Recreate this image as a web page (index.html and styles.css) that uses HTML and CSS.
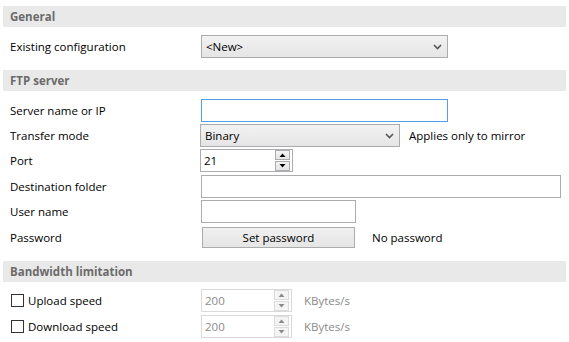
FILE: index.html
```html
<!DOCTYPE html>
<html>
<head>
<meta charset="utf-8">
<link rel="stylesheet" href="styles.css">
</head>
<body>
<div class="page">
  <div class="band band-first">General</div>
  <div class="row row-config">
    <div class="label">Existing configuration</div>
    <div class="combo combo-config"><span>&lt;New&gt;</span>
      <svg class="chev" width="9" height="6" viewBox="0 0 9 6"><path d="M1 1 L4.5 4.5 L8 1" fill="none" stroke="#555" stroke-width="1.6"/></svg>
    </div>
  </div>

  <div class="band">FTP server</div>
  <div class="group">
    <div class="row">
      <div class="label">Server name or IP</div>
      <div class="field field-focus w-server"></div>
    </div>
    <div class="row">
      <div class="label">Transfer mode</div>
      <div class="combo combo-mode"><span>Binary</span>
        <svg class="chev" width="9" height="6" viewBox="0 0 9 6"><path d="M1 1 L4.5 4.5 L8 1" fill="none" stroke="#555" stroke-width="1.6"/></svg>
      </div>
      <div class="note">Applies only to mirror</div>
    </div>
    <div class="row">
      <div class="label">Port</div>
      <div class="spin spin-port">
        <span class="spin-val">21</span>
        <div class="spin-btns">
          <div class="sbtn"><svg width="7" height="4" viewBox="0 0 7 4"><path d="M0.5 4 L3.5 0.5 L6.5 4 Z" fill="#000"/></svg></div>
          <div class="sbtn"><svg width="7" height="4" viewBox="0 0 7 4"><path d="M0.5 0 L3.5 3.5 L6.5 0 Z" fill="#000"/></svg></div>
        </div>
      </div>
    </div>
    <div class="row">
      <div class="label">Destination folder</div>
      <div class="field w-dest"></div>
    </div>
    <div class="row">
      <div class="label">User name</div>
      <div class="field w-user"></div>
    </div>
    <div class="row">
      <div class="label">Password</div>
      <div class="button">Set password</div>
      <div class="note note-pw">No password</div>
    </div>
  </div>

  <div class="band band-bw">Bandwidth limitation</div>
  <div class="group-bw">
    <div class="row row-bw">
      <div class="label label-check"><span class="check"></span>Upload speed</div>
      <div class="spin spin-dis">
        <span class="spin-val">200</span>
        <div class="spin-btns">
          <div class="sbtn"><svg width="7" height="4" viewBox="0 0 7 4"><path d="M0.5 4 L3.5 0.5 L6.5 4 Z" fill="#8a8a8a"/></svg></div>
          <div class="sbtn"><svg width="7" height="4" viewBox="0 0 7 4"><path d="M0.5 0 L3.5 3.5 L6.5 0 Z" fill="#8a8a8a"/></svg></div>
        </div>
      </div>
      <div class="unit">KBytes/s</div>
    </div>
    <div class="row row-bw">
      <div class="label label-check"><span class="check"></span>Download speed</div>
      <div class="spin spin-dis">
        <span class="spin-val">200</span>
        <div class="spin-btns">
          <div class="sbtn"><svg width="7" height="4" viewBox="0 0 7 4"><path d="M0.5 4 L3.5 0.5 L6.5 4 Z" fill="#8a8a8a"/></svg></div>
          <div class="sbtn"><svg width="7" height="4" viewBox="0 0 7 4"><path d="M0.5 0 L3.5 3.5 L6.5 0 Z" fill="#8a8a8a"/></svg></div>
        </div>
      </div>
      <div class="unit">KBytes/s</div>
    </div>
  </div>
</div>
</body>
</html>
```

FILE: styles.css
```css
* { box-sizing: border-box; }
html, body { margin: 0; padding: 0; background: #fff; }
body {
  font-family: "Open Sans", "Noto Sans", "DejaVu Sans", sans-serif;
  font-size: 11.5px;
  color: #000;
  width: 569px;
  height: 342px;
  overflow: hidden;
}
.page {
  padding: 6px 3px 0 3px;
  display: flex;
  flex-direction: column;
}
.band {
  height: 21px;
  background: #e9e9e9;
  color: #6b6b6b;
  font-weight: bold;
  padding-left: 7px;
  display: flex;
  align-items: center;
  margin-top: 11px;
}
.band-first { margin-top: 0; }
.band-bw { margin-top: 11px; }
.row {
  display: flex;
  align-items: center;
  height: 25px;
  padding-left: 7px;
}
.row-config { margin-top: 7px; height: 25px; }
.group { margin-top: 7px; display: flex; flex-direction: column; }
.group .row:nth-child(4), .group .row:nth-child(6) { height: 26px; }
.label { width: 191px; flex: none; }
.combo {
  height: 23px;
  border: 1px solid #acacac;
  background: linear-gradient(#f2f2f2, #e5e5e5);
  display: flex;
  align-items: center;
  justify-content: space-between;
  padding: 0 5px 0 4px;
  flex: none;
}
.combo-config { width: 247px; }
.combo-mode { width: 200px; margin-left: -1px; }
.chev { display: block; }
.note { margin-left: 9px; }
.note-pw { margin-left: 17px; }
.field {
  height: 23px;
  border: 1px solid #acacac;
  background: #fff;
  flex: none;
}
.field-focus { border-color: #569de5; }
.w-server { width: 247px; }
.w-dest { width: 360px; height: 23px; }
.w-user { width: 155px; height: 23px; }
.button {
  width: 153px;
  height: 21px;
  margin-left: 1px;
  border: 1px solid #acacac;
  background: linear-gradient(#f0f0f0, #e5e5e5);
  display: flex;
  align-items: center;
  justify-content: center;
  flex: none;
}
.spin {
  height: 23px;
  border: 1px solid #abadb3;
  background: #fff;
  display: flex;
  align-items: center;
  justify-content: space-between;
  padding: 0 2px 0 3px;
  flex: none;
}
.spin-port { width: 93px; margin-left: -1px; }
.spin-btns {
  display: flex;
  flex-direction: column;
  gap: 1px;
  width: 15px;
}
.sbtn {
  height: 10px;
  border: 1px solid #acacac;
  background: linear-gradient(#f3f3f3, #e6e6e6);
  display: flex;
  align-items: center;
  justify-content: center;
}
.sbtn svg { display: block; }
.spin-dis { width: 91px; border-color: #d9d9d9; color: #8a8a8a; }
.spin-dis .sbtn { border-color: #dcdcdc; background: #f4f4f4; }
.unit { margin-left: 12px; color: #8a8a8a; }
.group-bw { margin-top: 5px; display: flex; flex-direction: column; }
.row-bw { height: 26px; }
.label-check { display: flex; align-items: center; padding-left: 1px; }
.check {
  width: 13px;
  height: 13px;
  border: 1px solid #333;
  background: #fff;
  margin-right: 4px;
  flex: none;
}
```
